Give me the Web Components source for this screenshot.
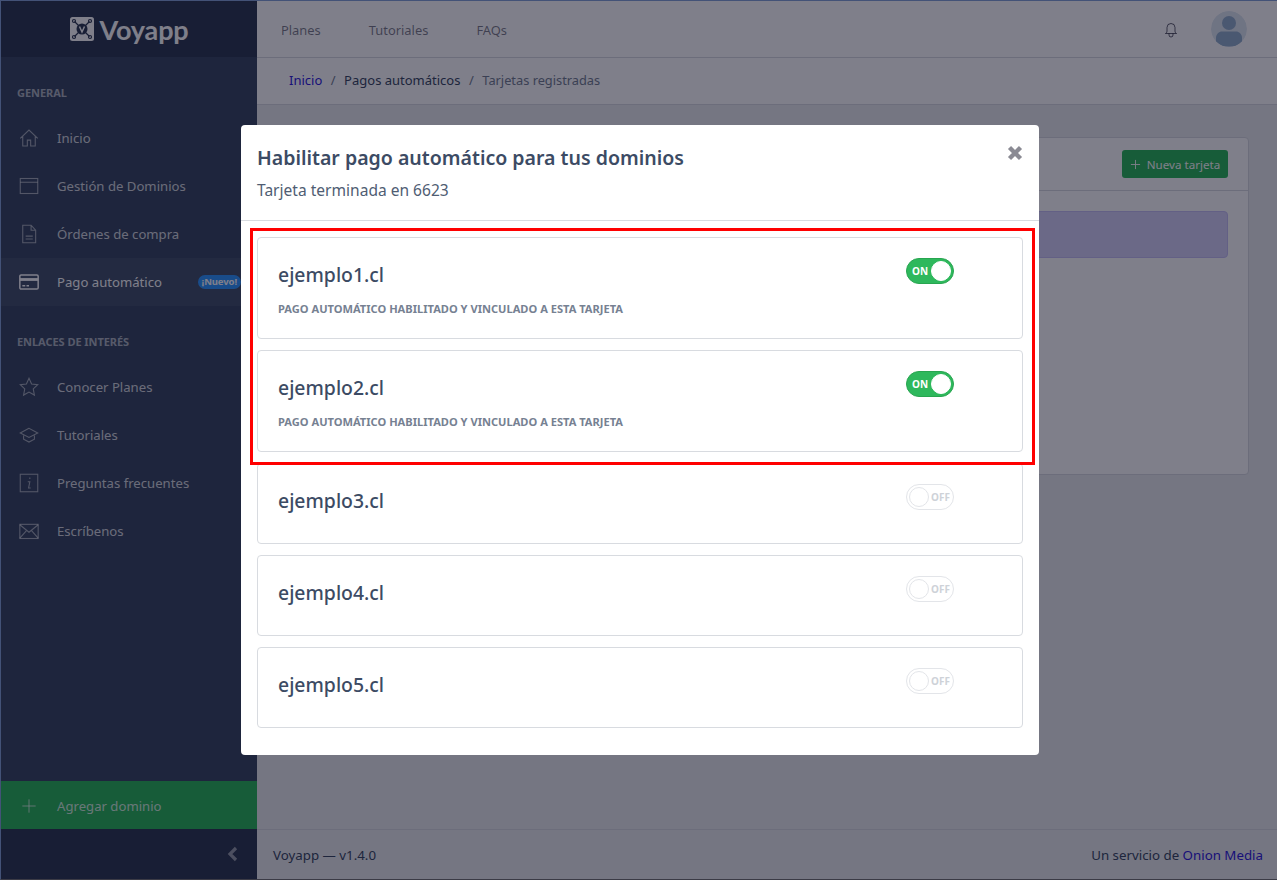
<!doctype html>
<html lang="es"><head><meta charset="utf-8"><title>Voyapp</title>
<style>
html,body{margin:0;padding:0;height:100%}
body{font-family:"Noto Sans","Open Sans",sans-serif;font-size:14px;color:#4f5d73;background:#ebedef}
</style></head>
<body>
<app-shell>
  <side-bar slot="side">
    <nav-title>GENERAL</nav-title>
    <nav-item icon="home">Inicio</nav-item>
    <nav-item icon="window">Gestión de Dominios</nav-item>
    <nav-item icon="doc">Órdenes de compra</nav-item>
    <nav-item icon="card" active badge="¡Nuevo!">Pago automático</nav-item>
    <nav-title>ENLACES DE INTERÉS</nav-title>
    <nav-item icon="star">Conocer Planes</nav-item>
    <nav-item icon="cap">Tutoriales</nav-item>
    <nav-item icon="info">Preguntas frecuentes</nav-item>
    <nav-item icon="mail">Escríbenos</nav-item>
  </side-bar>
  <top-header slot="head"></top-header>
  <page-card slot="main"></page-card>
  <app-footer slot="foot"></app-footer>
  <modal-dialog slot="modal" heading="Habilitar pago automático para tus dominios" sub="Tarjeta terminada en 6623">
    <domain-card name="ejemplo1.cl" on note="Pago automático habilitado y vinculado a esta tarjeta"></domain-card>
    <domain-card name="ejemplo2.cl" on note="Pago automático habilitado y vinculado a esta tarjeta"></domain-card>
    <domain-card name="ejemplo3.cl"></domain-card>
    <domain-card name="ejemplo4.cl"></domain-card>
    <domain-card name="ejemplo5.cl"></domain-card>
  </modal-dialog>
</app-shell>
<script>
const ICONS={
home:'<path d="M1.500 12.500 12 2.500l10.500 10M4.500 10v11.500h5.500v-7h4v7h5.500V10"/>',
window:'<rect x="1.500" y="3" width="21" height="18"/><path d="M1.500 7.500h21"/>',
doc:'<path d="M4.500 1.500h10L20 7.500v15H4.500zM14.500 1.500v6H20M8 14.500h8.500M8 18h8.500"/>',
card:'<rect x="1" y="3.500" width="22" height="17" rx="1.500" stroke-width="1.800"/><path d="M1 9h22" stroke-width="3.400"/><path d="M4 16.500h3.500M9 16.500h3" stroke-width="1.800"/>',
star:'<path d="m12 1.500 3.100 6.800 7.400 1-5.400 5 1.400 7.400-6.500-3.700-6.500 3.700 1.400-7.400-5.400-5 7.400-1z"/>',
cap:'<path d="M12 4 1.500 9.500 12 15l10.500-5.500zM5.500 12.500V17l6.500 3.500 6.500-3.500v-4.500"/>',
info:'<rect x="1.500" y="1.500" width="21" height="21"/><path d="M13 5.500v1.800M10.500 10.500h2.500l-1.500 7.500h2.500"/>',
mail:'<rect x="1" y="4" width="22" height="17"/><path d="m1 4.500 11 9 11-9M1 20.500l8.500-9.500M23 20.500 14.500 11"/>',
plus:'<path d="M12 2v20M2 12h20"/>'
};
function def(name,css,html){
  customElements.define(name,class extends HTMLElement{
    connectedCallback(){
      if(this.shadowRoot)return;
      const r=this.attachShadow({mode:'open'});
      r.innerHTML='<style>'+css+'</style>'+(typeof html==='function'?html(this):html);
    }
  });
}
def('app-shell',`
:host{display:block;height:880px;width:1277px;position:relative;box-sizing:border-box;overflow:hidden;background:#ebedef}
.wrap{display:flex;height:100%;box-sizing:border-box;border:1px solid #86a5d8;border-bottom-color:#777;border-right:0}
.col{flex:1;min-width:0;display:flex;flex-direction:column}
.mid{flex:1;min-height:0}
.overlay{position:absolute;inset:0;background:rgba(0,0,21,.5);display:flex;justify-content:flex-start;align-items:flex-start;padding:125px 0 0 241px;box-sizing:border-box}
`,`<div class="wrap"><slot name="side"></slot><div class="col"><slot name="head"></slot><div class="mid"><slot name="main"></slot></div><slot name="foot"></slot></div></div>
<div class="overlay"><slot name="modal"></slot></div>`);

def('side-bar',`
:host{display:flex;flex-direction:column;width:256px;flex:none;background:#3c4b64;color:rgba(255,255,255,.8)}
.brand{height:56px;box-sizing:border-box;flex:none;background:#303c54;display:flex;align-items:center;justify-content:center;gap:5px;color:#fff;padding:0 0 1px 1px}
.brand b{font:700 27px/1 "Lato","Noto Sans",sans-serif;letter-spacing:-.15px;margin-top:1px}
nav{flex:1;display:flex;flex-direction:column}
.add{height:48px;box-sizing:border-box;padding-top:1px;background:#2eb85c;display:flex;align-items:center;color:rgba(255,255,255,.8);flex:none;font-size:13.150px}
.add svg{width:16px;height:16px;margin:0 20px 0 20px;fill:none;stroke:currentColor;stroke-width:1.300}
.min{height:50px;flex:none;background:#303c54;display:flex;align-items:center;justify-content:flex-end;padding-right:19px}
.min svg{width:11px;height:16px;fill:none;stroke:rgba(255,255,255,.5);stroke-width:3.200}
`,`<div class="brand"><svg width="24" height="24" viewBox="0 0 24 24"><rect width="24" height="24" rx="2.500" fill="#fff"/><g stroke="#303c54" stroke-width="1.200" fill="none"><path d="m4.500 4.500 4 4M19.500 4.500l-4 4M4.500 19.500l4-4M19.500 19.500l-4-4"/><circle cx="4" cy="4" r="1.500"/><circle cx="20" cy="4" r="1.500"/><circle cx="4" cy="20" r="1.500"/><circle cx="20" cy="20" r="1.500"/></g><circle cx="12" cy="12" r="5.500" fill="#303c54"/><path d="m9.500 9.500 2.500 5.500 2.500-5.500" stroke="#fff" stroke-width="1.500" fill="none"/></svg><b>Voyapp</b></div>
<nav><slot></slot></nav>
<div class="add"><svg viewBox="0 0 24 24">${ICONS.plus}</svg>Agregar dominio</div>
<div class="min"><svg viewBox="0 0 11 16"><path d="M9 2 3 8l6 6"/></svg></div>`);

def('nav-title',`
:host{display:block;font-size:11px;font-weight:700;color:rgba(255,255,255,.6);padding:28px 16px 13px;line-height:16px;letter-spacing:-.05px}
`,`<slot></slot>`);

def('nav-item',`
:host{display:flex;align-items:center;height:48px;font-size:13.150px;color:rgba(255,255,255,.8);flex:none;white-space:nowrap;position:relative}
:host([active]){background:#46546c;color:#fff}
svg{width:20px;height:20px;flex:none;margin:0 18px;fill:none;stroke:rgba(255,255,255,.55);stroke-width:1.300}
:host([active]) svg{stroke:#fff}
.b{position:absolute;right:16px;top:17px;background:#39f;color:#fff;font-size:9.500px;font-weight:700;border-radius:7px;padding:0 4px;line-height:14px;letter-spacing:-.1px;height:14px}
`,t=>`<svg viewBox="0 0 24 24">${ICONS[t.getAttribute('icon')]}</svg><slot></slot>${t.hasAttribute('badge')?`<span class="b">${t.getAttribute('badge')}</span>`:''}`);

def('top-header',`
:host{display:block;background:#fff;flex:none;font-size:12.900px;color:rgba(0,0,21,.5)}
.bar{height:56px;box-sizing:content-box;display:flex;align-items:center;padding-left:24px;gap:48px;border-bottom:1px solid #d8dbe0}
.bar span{white-space:nowrap;padding-top:2px}
.right{margin-left:auto;display:flex;align-items:center;gap:32px;padding-right:30px}
.bell{width:16px;height:16px;fill:none;stroke:rgba(0,0,21,.6);stroke-width:1;margin-top:2px}
.av{width:36px;height:36px;border-radius:50%;display:block}
.crumb{height:47px;box-sizing:border-box;display:flex;align-items:center;padding:0 0 2px 32px;gap:8.500px;border-bottom:1px solid #d8dbe0;color:#768192;font-size:13px}
.crumb span:last-child{font-size:12.800px}
a{color:#321fdb;text-decoration:none}
.d{color:#3c4b64}
`,`<div class="bar"><span>Planes</span><span>Tutoriales</span><span>FAQs</span>
<div class="right"><svg class="bell" viewBox="0 0 16 16"><path d="M8 1.500a4 4 0 0 0-4 4V9c0 1.500-.800 2-1.500 2.500h11C12.800 11 12 10.500 12 9V5.500a4 4 0 0 0-4-4zM6 11.500V13a2 2 0 0 0 4 0v-1.500"/></svg>
<svg class="av" viewBox="0 0 36 36"><defs><clipPath id="c"><circle cx="18" cy="18" r="18"/></clipPath></defs><circle cx="18" cy="18" r="18" fill="#dfe8f1"/><g clip-path="url(#c)" fill="#95b0cc"><circle cx="18" cy="12" r="7"/><path d="M5 34v-7c0-4 3-6.500 6-6.500h14c3 0 6 2.500 6 6.500v7c-4 2-22 2-26 0z"/></g></svg></div></div>
<div class="crumb"><a>Inicio</a><span>/</span><span class="d">Pagos automáticos</span><span>/</span><span>Tarjetas registradas</span></div>`);

def('page-card',`
:host{display:block;padding:32px 28px 0 16px}
.card{height:338px;box-sizing:border-box;background:#fff;border:1px solid #d8dbe0;border-radius:4px}
.h{height:52px;box-sizing:content-box;border-bottom:1px solid #d8dbe0;display:flex;justify-content:flex-end;align-items:center;padding-right:20px}
.btn{background:#2eb85c;color:#fff;height:28px;width:106px;border-radius:3px;display:flex;align-items:center;justify-content:center;font-size:11.600px;gap:6px}
.btn svg{width:11px;height:11px;fill:none;stroke:#fff;stroke-width:2}
.al{margin:20px 20px 0;height:47px;box-sizing:border-box;background:#d6d2f8;border:1px solid #c6c0f5;border-radius:4px}
`,`<div class="card"><div class="h"><div class="btn"><svg viewBox="0 0 24 24">${ICONS.plus}</svg>Nueva tarjeta</div></div><div class="al"></div></div>`);

def('app-footer',`
:host{display:flex;flex:none;height:50px;box-sizing:border-box;border-top:1px solid #d8dbe0;background:#ebedef;align-items:center;justify-content:space-between;padding:0 14px 0 16px;font-size:13.300px;color:#3c4b64}
a{color:#321fdb}
`,`<span>Voyapp — v1.4.0</span><span>Un servicio de <a>Onion Media</a></span>`);

def('modal-dialog',`
:host{display:block;width:798px;height:630px;box-sizing:border-box;background:#fff;border-radius:4px;position:relative;color:#3c4b64}
.head{height:96px;box-sizing:border-box;border-bottom:1px solid #d8dbe0;padding:19px 16px 0;position:relative}
h5{margin:0;font-size:19.550px;font-weight:600;line-height:28px;color:#3c4b64;white-space:nowrap}
p{margin:6px 0 0;font-size:15.550px;line-height:24px;color:#4f5d73}
.x{position:absolute;right:16px;top:20px;width:16px;height:16px;fill:none;stroke:#8a8a93;stroke-width:4.400}
.body{padding:16px;display:flex;flex-direction:column;gap:11px}
.mark{position:absolute;left:9px;top:103px;width:785px;height:237px;box-sizing:border-box;border:3px solid #f00;pointer-events:none}
`,t=>`<div class="head"><h5>${t.getAttribute('heading')}</h5><p>${t.getAttribute('sub')}</p>
<svg class="x" viewBox="0 0 16 16"><path d="m2.500 2.500 11 11M13.500 2.500l-11 11"/></svg></div>
<div class="body"><slot></slot></div><div class="mark"></div>`);

def('domain-card',`
:host{display:block;border:1px solid #d8dbe0;border-radius:4px;background:#fff;padding:20px;height:81px;box-sizing:border-box;position:relative}
:host([on]){height:102px}
h4{margin:0;font-size:19.400px;font-weight:500;line-height:33px;color:#3c4b64;white-space:nowrap}
.n{margin:10px 0 0;font-size:11.100px;font-weight:700;line-height:16px;color:#768192;text-transform:uppercase;white-space:nowrap}
toggle-switch{position:absolute;left:648px;top:20px}
`,t=>`<h4>${t.getAttribute('name')}</h4>${t.hasAttribute('note')?`<div class="n">${t.getAttribute('note')}</div>`:''}<toggle-switch ${t.hasAttribute('on')?'on':''}></toggle-switch>`);

def('toggle-switch',`
:host{display:flex;width:48px;height:26px;box-sizing:border-box;border-radius:13px;border:1px solid #e3e5e9;background:#fff;align-items:center;font-size:10px;font-weight:700;color:#ced2d8;padding:0 2px;gap:2px}
:host([on]){background:#2eb85c;border-color:#28a550;color:#fff;flex-direction:row-reverse;justify-content:space-between;padding:0 2px 0 5px}
i{width:20px;height:20px;border-radius:50%;background:#fff;border:1px solid #e3e5e9;box-sizing:border-box;flex:none}
:host([on]) i{border-color:#fff}
`,t=>`<i></i><span>${t.hasAttribute('on')?'ON':'OFF'}</span>`);
</script>
</body></html>
